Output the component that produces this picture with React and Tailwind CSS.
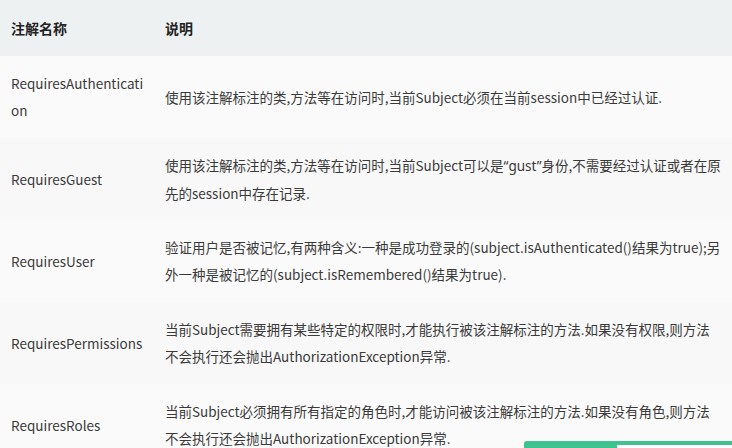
import React from "react";

const rows = [
  {
    name: "RequiresAuthentication",
    desc: "使用该注解标注的类,方法等在访问时,当前Subject必须在当前session中已经过认证.",
  },
  {
    name: "RequiresGuest",
    desc: (
      <>
        使用该注解标注的类,方法等在访问时,当前Subject可以是
        <span style={{ fontFamily: '"Noto Sans", sans-serif' }}>“gust”</span>
        身份,不需要经过认证或者在原先的session中存在记录.
      </>
    ),
  },
  {
    name: "RequiresUser",
    desc: "验证用户是否被记忆,有两种含义:一种是成功登录的(subject.isAuthenticated()结果为true);另外一种是被记忆的(subject.isRemembered()结果为true).",
  },
  {
    name: "RequiresPermissions",
    desc: "当前Subject需要拥有某些特定的权限时,才能执行被该注解标注的方法.如果没有权限,则方法不会执行还会抛出AuthorizationException异常.",
  },
  {
    name: "RequiresRoles",
    desc: "当前Subject必须拥有所有指定的角色时,才能访问被该注解标注的方法.如果没有角色,则方法不会执行还会抛出AuthorizationException异常.",
  },
];

export default function App() {
  return (
    <div
      className="relative h-[448px] w-[732px] overflow-hidden bg-[#fafafa] text-[13.5px] leading-[27px] text-[#3a3a3a]"
      style={{ fontFamily: '"Noto Sans CJK SC", sans-serif' }}
    >
      <table className="w-full table-fixed border-collapse">
        <colgroup>
          <col className="w-[154px]" />
          <col />
        </colgroup>
        <thead>
          <tr className="bg-[#eef1f2]">
            <th className="h-[56px] pl-[11px] pr-[4px] text-left align-middle text-[14px] font-bold text-[#222]">注解名称</th>
            <th className="h-[56px] px-[11px] text-left align-middle text-[14px] font-bold text-[#222]">说明</th>
          </tr>
        </thead>
        <tbody>
          {rows.map((r, i) => (
            <tr key={r.name} className={i % 2 === 0 ? "bg-[#fafafa]" : "bg-[#f8f8f8]"}>
              <td className="h-[82px] break-all pl-[11px] pr-[4px] align-middle">{r.name}</td>
              <td className="h-[82px] pl-[11px] pr-[10px] align-middle">{r.desc}</td>
            </tr>
          ))}
        </tbody>
      </table>

      {/* floating bar peeking at the bottom */}
      <div className="absolute bottom-0 left-[524px] flex h-[7px] w-[208px] items-end rounded-tl-[3px] bg-[#3ec28f] pl-[93px]">
        <div className="h-[3px] flex-1 bg-white" />
      </div>
    </div>
  );
}
